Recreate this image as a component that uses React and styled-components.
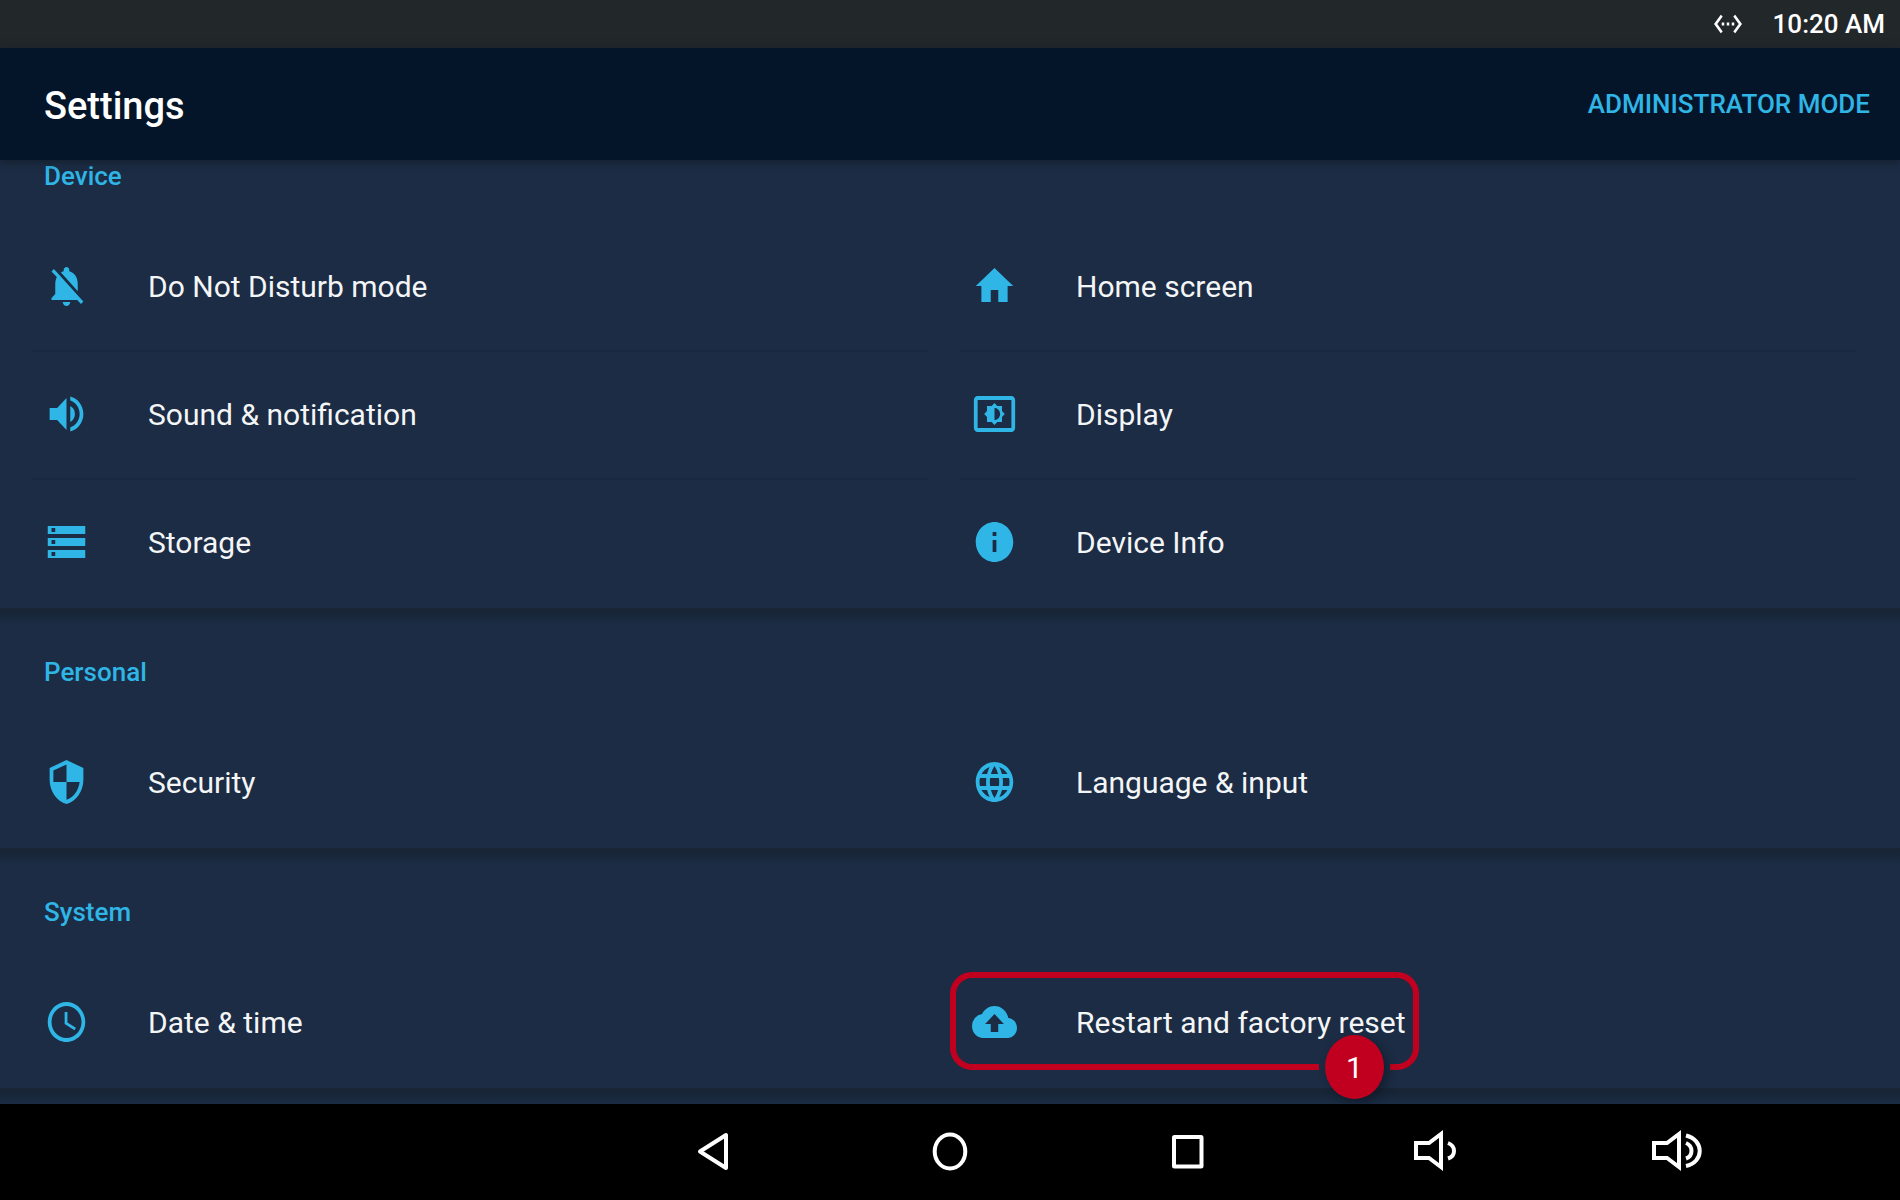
import styled, { createGlobalStyle } from 'styled-components';
import {
    MdAccessTime,
    MdBackup,
    MdHome,
    MdInfo,
    MdLanguage,
    MdNotificationsOff,
    MdSecurity,
    MdSettingsBrightness,
    MdSettingsEthernet,
    MdStorage,
    MdVolumeUp,
} from 'react-icons/md';

const sections = [
    {
        title: 'Device',
        items: [
            { label: 'Do Not Disturb mode', icon: MdNotificationsOff },
            { label: 'Home screen', icon: MdHome },
            { label: 'Sound & notification', icon: MdVolumeUp },
            { label: 'Display', icon: MdSettingsBrightness },
            { label: 'Storage', icon: MdStorage },
            { label: 'Device Info', icon: MdInfo },
        ],
    },
    {
        title: 'Personal',
        items: [
            { label: 'Security', icon: MdSecurity },
            { label: 'Language & input', icon: MdLanguage },
        ],
    },
    {
        title: 'System',
        items: [
            { label: 'Date & time', icon: MdAccessTime },
            { label: 'Restart and factory reset', icon: MdBackup, step: 1 },
        ],
    },
];

const speaker = <path d="M31 15h13L56 6v33L44 30H31z" />;

const navItems = [
    { label: 'Back', shape: <path d="M27 23.5L53 7v33z" strokeLinejoin="round" /> },
    { label: 'Home', shape: <ellipse cx="40" cy="23.5" rx="15.3" ry="17" /> },
    { label: 'Recent apps', shape: <rect x="26" y="9" width="27.5" height="29.5" rx="0.5" /> },
    {
        label: 'Volume down',
        shape: (
            <>
                {speaker}
                <path d="M63 15C71 18 71 28 63 30.5" />
            </>
        ),
    },
    {
        label: 'Volume up',
        shape: (
            <>
                {speaker}
                <path d="M63 15C70.3 18 70.3 28 63 30.5" />
                <path d="M63 7.5C81.3 12 81.3 34 63 38" />
            </>
        ),
    },
];

const App = () => {
    return (
        <Screen>
            <GlobalStyle />
            <StatusBar>
                <MdSettingsEthernet preserveAspectRatio="none" />
                <time>10:20 AM</time>
            </StatusBar>
            <Header>
                <Title>Settings</Title>
                <ModeBtn type="button">ADMINISTRATOR MODE</ModeBtn>
            </Header>
            <Content>
                {sections.map((section) => (
                    <Section key={section.title}>
                        <SectionTitle>{section.title}</SectionTitle>
                        <ItemGrid>
                            {section.items.map(({ label, icon: Icon, step }, i) => (
                                <Item key={label} type="button" $divided={i < section.items.length - 2}>
                                    <Icon preserveAspectRatio="none" />
                                    <span>{label}</span>
                                    {step && (
                                        <Highlight>
                                            <Step>{step}</Step>
                                        </Highlight>
                                    )}
                                </Item>
                            ))}
                        </ItemGrid>
                    </Section>
                ))}
            </Content>
            <NavBar>
                {navItems.map((item) => (
                    <NavBtn key={item.label} type="button" aria-label={item.label}>
                        <NavIcon viewBox="0 0 80 48">{item.shape}</NavIcon>
                    </NavBtn>
                ))}
            </NavBar>
        </Screen>
    );
};

export default App;

const GlobalStyle = createGlobalStyle`
    * {
        box-sizing: border-box;
    }

    body {
        margin: 0;
        background-color: #000;
        font-family: Roboto, 'Liberation Sans', sans-serif;
    }

    button {
        padding: 0;
        border: none;
        background: none;
        color: inherit;
        font: inherit;
        cursor: pointer;
    }
`;

const Screen = styled.div`
    display: flex;
    flex-direction: column;
    height: 100vh;
    color: #f4f5f6;
`;

const StatusBar = styled.div`
    display: flex;
    flex: none;
    align-items: center;
    justify-content: flex-end;
    gap: 30px;
    height: 48px;
    padding-right: 15px;
    background-color: #22272a;
    color: #fff;
    font-size: 26px;
    font-weight: 500;

    svg {
        width: 30px;
        height: 34px;
    }
`;

const Header = styled.header`
    display: flex;
    flex: none;
    align-items: center;
    justify-content: space-between;
    height: 112px;
    padding: 0 30px 0 44px;
    background-color: #04152a;
    box-shadow: 0 2px 8px rgba(20, 30, 42, 0.9);
    z-index: 1;
`;

const Title = styled.h1`
    margin: 0;
    padding-top: 4px;
    color: #fff;
    font-size: 38px;
    font-weight: 500;
`;

const ModeBtn = styled.button`
    && {
        color: #2fb5e6;
        font-size: 26px;
        font-weight: 500;
    }
`;

const Content = styled.main`
    flex: 1;
    min-height: 0;
    overflow: hidden;
    background-color: #1b2c44;
`;

const Section = styled.section`
    &::after {
        content: '';
        display: block;
        height: 16px;
        background: linear-gradient(#172537 30%, #1b2c44);
    }

    /* the list is scrolled, its first heading is partly under the header */
    &:first-child {
        margin-top: -32px;
    }
`;

const SectionTitle = styled.h2`
    margin: 0;
    padding-left: 44px;
    color: #2fb5e6;
    font-size: 26px;
    font-weight: 500;
    line-height: 96px;
`;

const ItemGrid = styled.div`
    display: grid;
    grid-template-columns: 1fr 1fr;
    column-gap: 32px;
    padding: 0 44px 0 32px;
`;

const Item = styled.button`
    && {
        position: relative;
        display: flex;
        align-items: center;
        gap: 59px;
        height: 128px;
        padding: 0 0 2px 12px;
        border-bottom: 2px solid ${(props) => (props.$divided ? '#19283e' : 'transparent')};
        font-size: 30px;
        text-align: left;
    }

    > svg {
        width: 45px;
        height: 48px;
        color: #2fb5e6;
    }
`;

const Highlight = styled.span`
    position: absolute;
    top: 12px;
    left: -10px;
    width: 469px;
    height: 98px;
    border: 6px solid #c1001f;
    border-radius: 22px;

    /* opening in the frame behind the step number */
    &::after {
        content: '';
        position: absolute;
        right: 23px;
        bottom: -6px;
        width: 71px;
        height: 6px;
        background-color: #1b2c44;
    }
`;

const Step = styled.span`
    position: absolute;
    right: 29px;
    bottom: -35px;
    z-index: 1;
    display: flex;
    align-items: center;
    justify-content: center;
    width: 59px;
    height: 64px;
    border-radius: 50%;
    background-color: #c1001f;
    box-shadow: 4px 4px 10px rgba(10, 18, 30, 0.5);
    color: #fff;
`;

const NavBar = styled.nav`
    display: flex;
    flex: none;
    height: 96px;
    padding-left: 31.25%;
    background-color: #000;
`;

const NavBtn = styled.button`
    display: flex;
    align-items: center;
    justify-content: center;
    width: calc(100% / 5.5);
`;

const NavIcon = styled.svg`
    width: 80px;
    height: 48px;
    fill: none;
    stroke: #fff;
    stroke-width: 4;
`;
